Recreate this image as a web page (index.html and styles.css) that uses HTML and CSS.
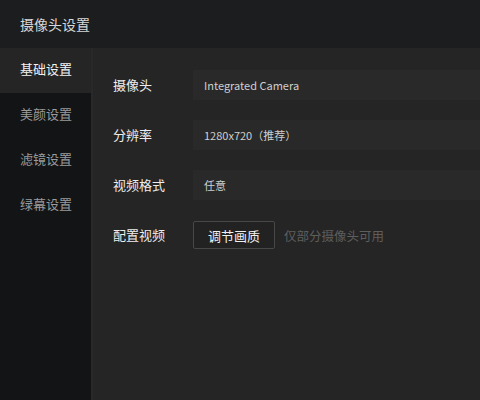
FILE: index.html
```html
<!DOCTYPE html>
<html lang="zh-CN">
  <head>
    <meta charset="utf-8">
    <title>摄像头设置</title>
    <link rel="stylesheet" href="styles.css">
  </head>
  <body>
    <header class="title-bar">摄像头设置</header>
    <div class="panel">
      <nav class="side-menu">
        <div class="menu-item active">基础设置</div>
        <div class="menu-item">美颜设置</div>
        <div class="menu-item">滤镜设置</div>
        <div class="menu-item">绿幕设置</div>
      </nav>
      <main class="settings">
        <div class="row">
          <span class="label">摄像头</span>
          <div class="value">Integrated Camera</div>
        </div>
        <div class="row">
          <span class="label">分辨率</span>
          <div class="value">1280x720（推荐）</div>
        </div>
        <div class="row">
          <span class="label">视频格式</span>
          <div class="value">任意</div>
        </div>
        <div class="row">
          <span class="label">配置视频</span>
          <button class="btn">调节画质</button>
          <span class="hint">仅部分摄像头可用</span>
        </div>
      </main>
    </div>
  </body>
</html>
```

FILE: styles.css
```css
body {
  margin: 0;
  width: 480px;
  height: 400px;
  overflow: hidden;
  background: #252525;
  font-family: "Noto Sans CJK SC", "Noto Sans", sans-serif;
  color: #e6e6e6;
}

.title-bar {
  height: 48px;
  display: flex;
  align-items: center;
  padding-left: 20px;
  background: #1c1d1f;
  font-size: 14px;
  color: #d8d8d8;
}

.panel {
  display: flex;
  height: 352px;
}

.side-menu {
  width: 91px;
  flex-shrink: 0;
  background: #131416;
}

.menu-item {
  height: 45px;
  box-sizing: border-box;
  padding: 0 0 4px 20px;
  display: flex;
  align-items: center;
  font-size: 13px;
  color: #9a9a9a;
}

.menu-item.active {
  background: #252525;
  color: #f2f2f2;
}

.settings {
  flex: 1;
  border-left: 2px solid #292929;
  padding: 22px 0 0 20px;
  display: flex;
  flex-direction: column;
  gap: 20px;
}

.row {
  display: flex;
  align-items: center;
  height: 30px;
}

.label {
  width: 80px;
  flex-shrink: 0;
  margin-bottom: 2px;
  font-size: 13px;
  color: #ededed;
}

.value {
  flex: 1;
  height: 30px;
  display: flex;
  align-items: center;
  padding-left: 11px;
  background: #292929;
  font-size: 11px;
  color: #cfcfcf;
}

.btn {
  height: 28px;
  padding: 0 14px;
  background: #222;
  border: 1px solid #474747;
  border-radius: 2px;
  font-family: inherit;
  font-size: 13px;
  color: #f0f0f0;
}

.hint {
  margin-left: 9px;
  font-size: 12.5px;
  color: #5e5e5e;
}
```
